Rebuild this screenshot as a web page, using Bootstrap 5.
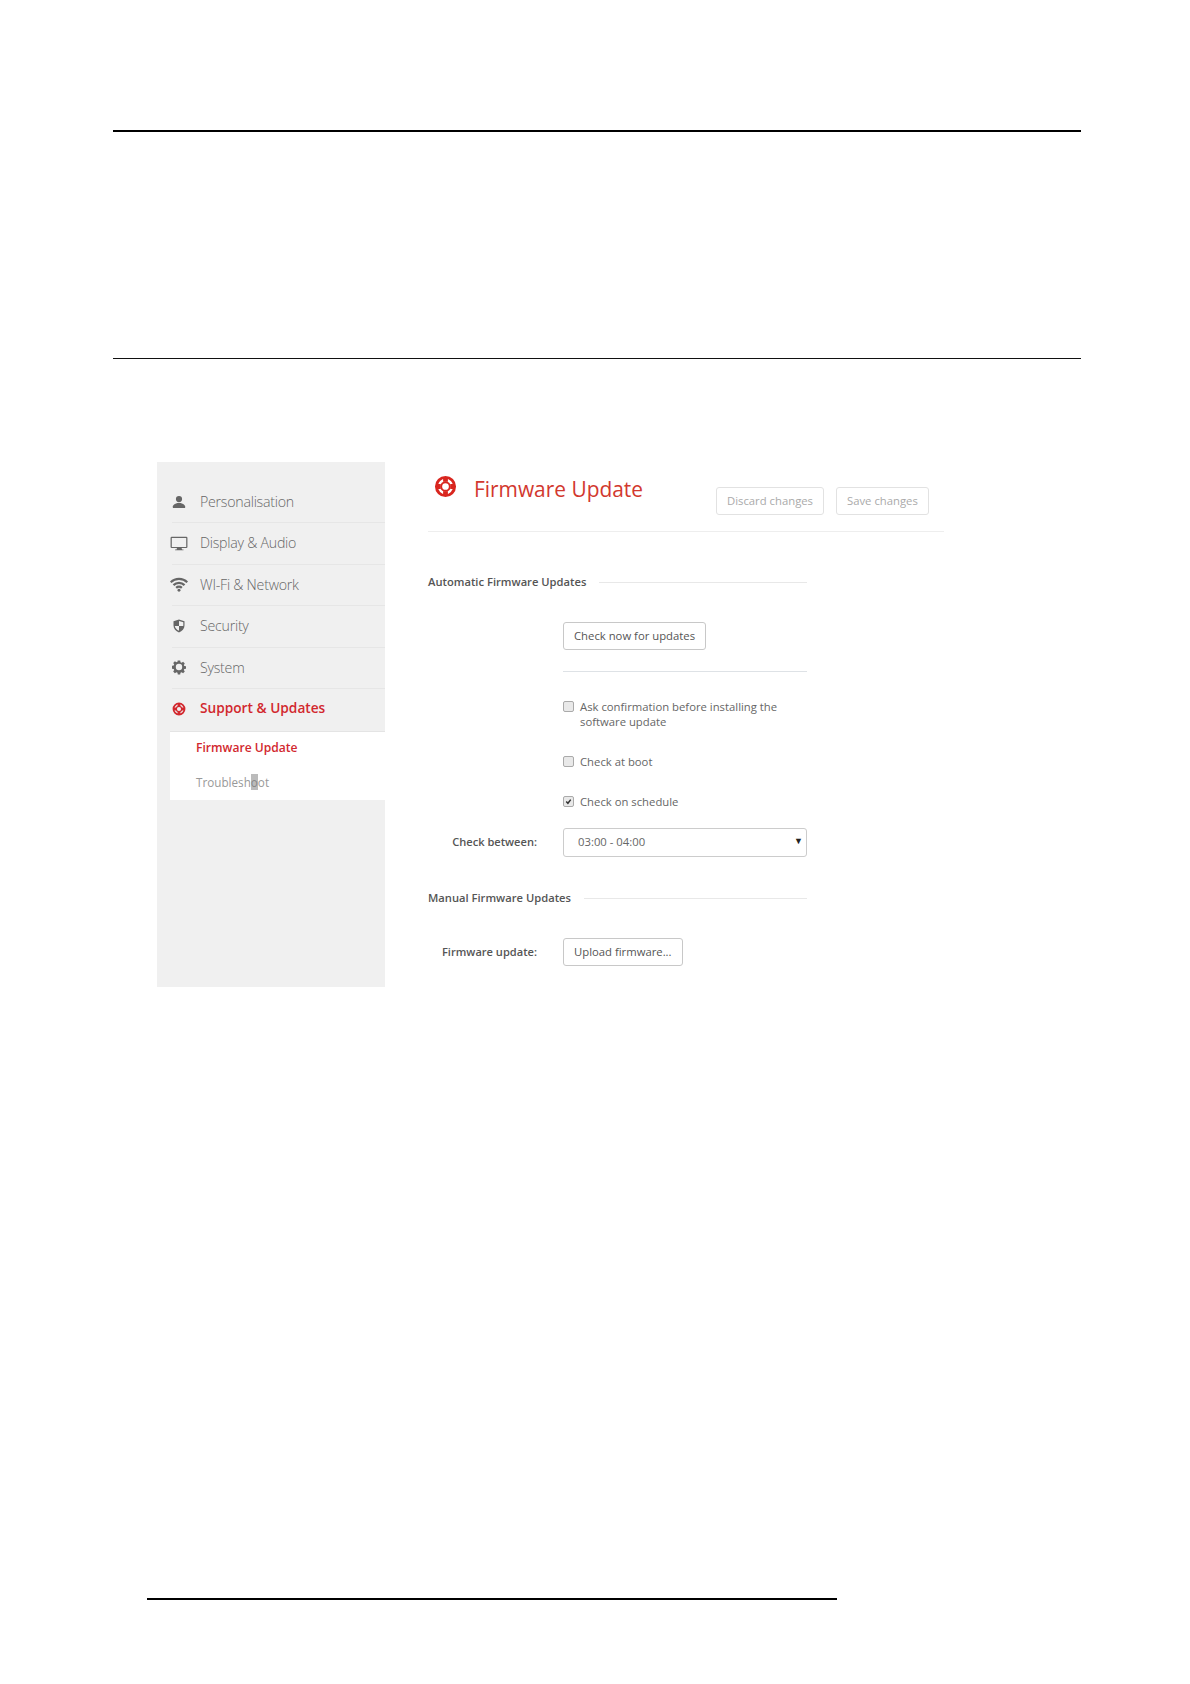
<!DOCTYPE html>
<html lang="en">
<head>
<meta charset="utf-8">
<title>Firmware Update</title>
<link href="https://cdn.jsdelivr.net/npm/bootstrap@5.3.0/dist/css/bootstrap.min.css" rel="stylesheet">
<style>
body{background:#fff;font-family:"Open Sans","Liberation Sans",sans-serif;color:#555;height:1684px;overflow:hidden}
.rule-top{margin:130px 109px 0 113px;height:2px;background:#000}
.rule-mid{margin:226px 109px 0 113px;height:1px;background:#111}
.shot{margin:103px 0 0 157px;height:525px}
.side-nav{width:228px;background:#f0f0f0;padding-top:20px;flex:none}
.nav-row{height:41.4px;padding-left:13px;padding-bottom:2px;font-size:14.2px;letter-spacing:-.25px;font-weight:300;color:#666;gap:12px;position:relative}
.nav-row.sep::after{content:"";position:absolute;left:15px;right:0;bottom:0;height:1px;background:#e6e6e6}
.nav-row svg{width:18px;height:18px;flex:none;fill:#666}
.nav-row.on{color:#d2282e;font-weight:600;font-size:13.7px;letter-spacing:0}
.nav-row.on svg{fill:#d2282e}
.sub-panel{margin:.5px 0 0 13px;height:69px;background:#fff;border-top:1px solid #e4e4e4;padding-left:26px;font-size:12.1px}
.sub-on{height:33px;color:#d2282e;font-weight:600}
.sub-off{height:35px;color:#999;font-weight:400;font-size:11.7px}
.sub-off b{background:#bbb;font-weight:400;color:#888}
.main-pane{width:516px;margin-left:43px;flex:none;font-size:11.3px;color:#666}
.head-row{height:70px;border-bottom:1px solid #eee}
.title-mark{width:23px;height:23px;margin:13px 17px 0 6px;flex:none}
.page-title{font-size:20.9px;font-weight:400;color:#d2382e;margin:12px 0 0;line-height:30px;width:242px}
.ghost-btn,.plain-btn{font-size:11.3px;line-height:16px;padding:5px 10px;border-radius:3px;background:#fff;height:28px;white-space:nowrap}
.ghost-btn{color:#aaa;border:1px solid #e2e2e2;margin-top:25px}
.ghost-next{margin-left:12px}
.plain-btn{color:#555;border:1px solid #c8c8c8}
.sect-head{width:379px;font-weight:600;font-size:11.2px;color:#555;gap:13px;line-height:16px;white-space:nowrap}
.sect-line{height:1px;background:#e8e8e8;flex:1}
.form-cols{width:379px}
.field-name{width:135px;text-align:right;padding-right:26px;font-weight:600;font-size:11.1px;color:#555;flex:none;white-space:nowrap}
.field-body{width:244px;flex:none}
.check-row{gap:6px;line-height:15px;color:#666}
.check-row .form-check-input{width:11px;height:11px;margin:2px 0 0 0;border:1px solid #aaa;border-radius:2px;background-color:#e9e9e9;flex:none}
.check-row .form-check-input:checked{background-color:#e9e9e9;border-color:#aaa;background-image:url("data:image/svg+xml,%3csvg xmlns='http://www.w3.org/2000/svg' viewBox='0 0 12 12'%3e%3cpath fill='none' stroke='%23333' stroke-width='2' d='M3 6l2.200 2.400L9 3.500'/%3e%3c/svg%3e")}
.sel-wrap{position:relative}
.sel-wrap .form-select{height:29px;padding:0 14px;font-size:11.3px;color:#666;border:1px solid #ccc;border-radius:3px;background-image:none;font-family:inherit}
.sel-caret{position:absolute;right:4px;top:6px;font-size:9px;color:#222;pointer-events:none;line-height:14px}
.rule-foot{margin:611px 0 0 147px;width:690px;height:2px;background:#000}
.gap-a{margin-top:42px}.gap-b{margin-top:32px}.gap-c{margin-top:21px}.gap-d{margin-top:27px}.gap-e1{margin-top:24.5px}.gap-e{margin-top:25.500px}.gap-f{margin-top:19px}.gap-g{margin-top:33px}.gap-h{margin-top:32px}
</style>
</head>
<body>
<svg width="0" height="0" class="d-block">
<defs>
<symbol id="i-buoy" viewBox="0 0 24 24"><path fill-rule="evenodd" d="M12 1a11 11 0 1 0 0 22 11 11 0 0 0 0-22Zm0 3a8 8 0 1 1 0 16 8 8 0 0 1 0-16Z"/><path fill-rule="evenodd" d="M12 6.500a5.500 5.500 0 1 0 0 11 5.500 5.500 0 0 0 0-11Zm0 2a3.500 3.500 0 1 1 0 7 3.500 3.500 0 0 1 0-7Z"/><path d="M9.500 3h5v4h-5zM9.500 17h5v4h-5zM3 9.500h4v5H3zM17 9.500h4v5h-4z"/></symbol>
</defs>
</svg>
<div class="rule-top"></div>
<div class="rule-mid"></div>
<div class="shot d-flex">
  <nav class="side-nav">
    <div class="nav-row sep d-flex align-items-center">
      <svg viewBox="0 0 18 18"><path d="M3.500 15s-.8 0-.8-1c0-1.200 1.600-4 6.300-4s6.300 2.800 6.300 4c0 1-.8 1-.8 1h-11ZM9 9.200a3 3 0 1 0 0-6.200 3 3 0 0 0 0 6.200Z"/></svg><span>Personalisation</span>
    </div>
    <div class="nav-row sep d-flex align-items-center">
      <svg viewBox="0 0 16 16"><path fill-rule="evenodd" d="M1.500 2.500h13a1 1 0 0 1 1 1v8a1 1 0 0 1-1 1h-4.200l.4 1.200h1.300v.8H4.500v-.8h1.300l.4-1.200H1.500a1 1 0 0 1-1-1v-8a1 1 0 0 1 1-1Zm.1 1v8h12.800v-8H1.600Z"/></svg><span>Display &amp; Audio</span>
    </div>
    <div class="nav-row sep d-flex align-items-center">
      <svg viewBox="0 0 16 16"><path fill="none" stroke="#666" stroke-width="2" d="M.6 6.500a10.600 10.600 0 0 1 14.800 0M3.100 9a7 7 0 0 1 9.800 0M5.500 11.400a3.600 3.600 0 0 1 5 0"/><circle cx="8" cy="13.500" r="1.300"/></svg><span>WI-Fi &amp; Network</span>
    </div>
    <div class="nav-row sep d-flex align-items-center">
      <svg viewBox="0 0 18 18"><path fill-rule="evenodd" d="M9 2.500l5.500 1.800v4.200c0 3.300-2.300 5.800-5.500 7-3.200-1.200-5.500-3.700-5.500-7V4.300L9 2.500Zm0 1.500v5H4.800c.3 2.100 2 3.800 4.200 4.800V9h4.200c.1-.3.100-.6.100-.9V5.300L9 4Z"/></svg><span>Security</span>
    </div>
    <div class="nav-row sep d-flex align-items-center">
      <svg viewBox="0 0 18 18"><path fill-rule="evenodd" d="M7.800 2.500h2.400l.3 1.700 1.100.5 1.500-1 1.700 1.700-1 1.500.5 1.100 1.700.3v2.400l-1.700.3-.5 1.100 1 1.500-1.700 1.700-1.500-1-1.100.5-.3 1.700H7.800l-.3-1.700-1.100-.5-1.500 1-1.700-1.700 1-1.500-.5-1.100-1.700-.3V7.800l1.700-.3.500-1.100-1-1.500 1.700-1.700 1.500 1 1.100-.5.300-1.700ZM9 5.800a3.200 3.200 0 1 0 0 6.400 3.200 3.200 0 0 0 0-6.400Z"/></svg><span>System</span>
    </div>
    <div class="nav-row on d-flex align-items-center">
      <svg viewBox="0 0 18 18"><use href="#i-buoy" x="2" y="2" width="14" height="14"/></svg><span>Support &amp; Updates</span>
    </div>
    <div class="sub-panel">
      <div class="sub-on d-flex align-items-center">Firmware Update</div>
      <div class="sub-off d-flex align-items-center"><span>Troublesh<b>o</b>ot</span></div>
    </div>
  </nav>
  <main class="main-pane">
    <div class="head-row d-flex">
      <svg class="title-mark" fill="#d9261f"><use href="#i-buoy"/></svg>
      <h1 class="page-title">Firmware Update</h1>
      <button type="button" class="ghost-btn">Discard changes</button>
      <button type="button" class="ghost-btn ghost-next">Save changes</button>
    </div>
    <div class="sect-head gap-a d-flex align-items-center"><span>Automatic Firmware Updates</span><span class="sect-line"></span></div>
    <div class="form-cols">
      <div class="d-flex gap-b"><div class="field-name"></div><div class="field-body"><button type="button" class="plain-btn">Check now for updates</button></div></div>
      <div class="d-flex gap-c"><div class="field-name"></div><div class="field-body border-top"></div></div>
      <div class="d-flex gap-d"><div class="field-name"></div><div class="field-body check-row d-flex"><input class="form-check-input" type="checkbox" aria-label="Ask"><span>Ask confirmation before installing the software update</span></div></div>
      <div class="d-flex gap-e1"><div class="field-name"></div><div class="field-body check-row d-flex"><input class="form-check-input" type="checkbox" aria-label="Boot"><span>Check at boot</span></div></div>
      <div class="d-flex gap-e"><div class="field-name"></div><div class="field-body check-row d-flex"><input class="form-check-input" type="checkbox" checked aria-label="Schedule"><span>Check on schedule</span></div></div>
      <div class="d-flex gap-f align-items-center"><div class="field-name">Check between:</div><div class="field-body sel-wrap"><select class="form-select" aria-label="Check between"><option>03:00 - 04:00</option></select><span class="sel-caret">▼</span></div></div>
    </div>
    <div class="sect-head gap-g d-flex align-items-center"><span>Manual Firmware Updates</span><span class="sect-line"></span></div>
    <div class="d-flex form-cols gap-h align-items-center"><div class="field-name">Firmware update:</div><div class="field-body"><button type="button" class="plain-btn">Upload firmware...</button></div></div>
  </main>
</div>
<div class="rule-foot"></div>
<script src="https://cdn.jsdelivr.net/npm/bootstrap@5.3.0/dist/js/bootstrap.bundle.min.js"></script>
</body>
</html>
